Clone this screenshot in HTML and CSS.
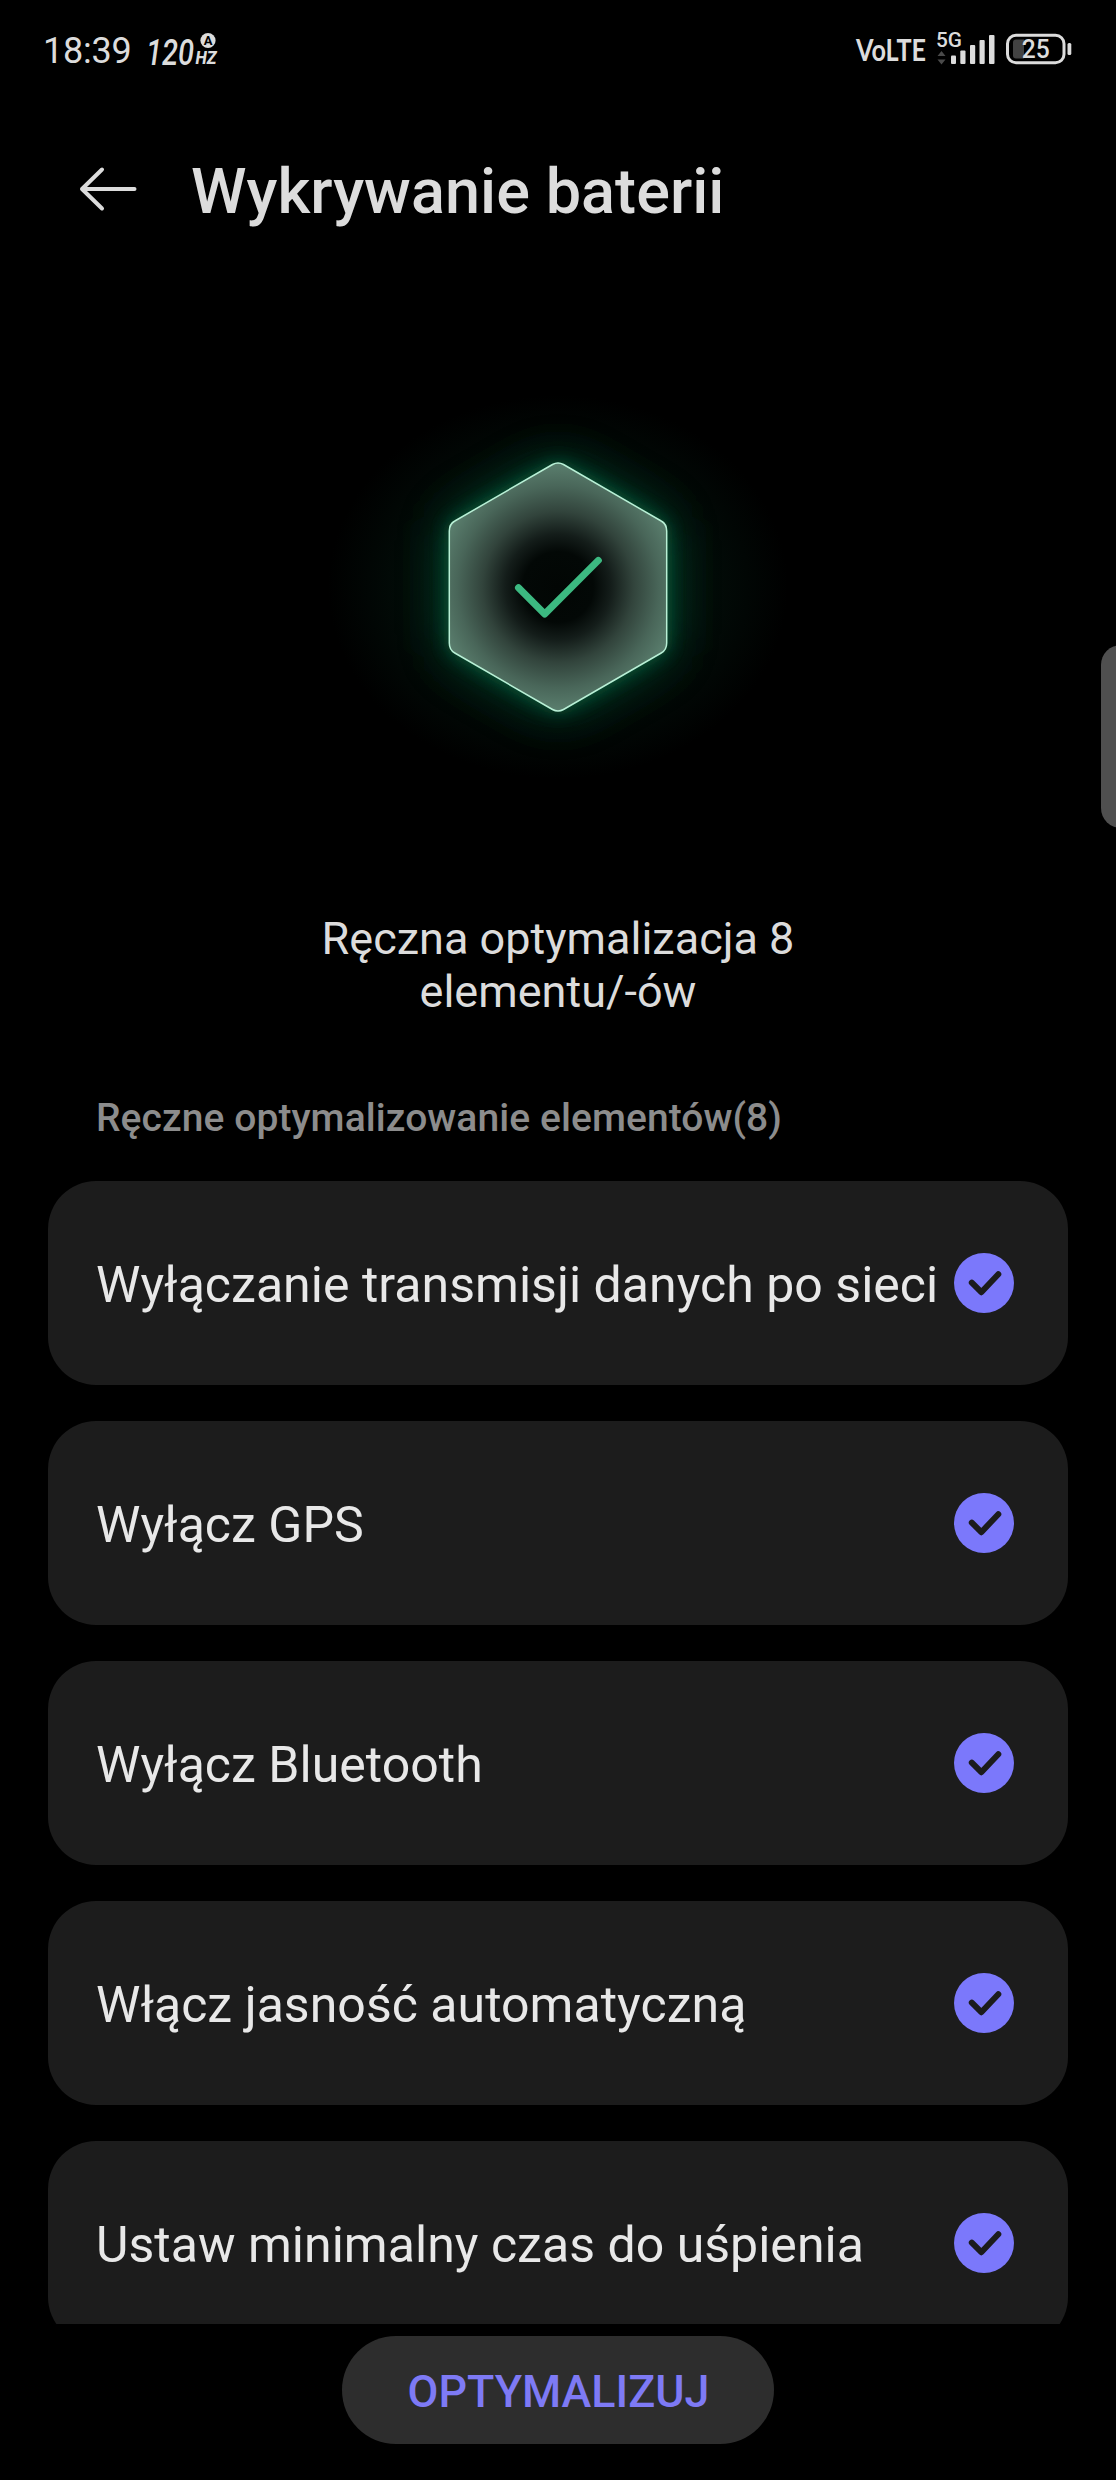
FILE: index.html
```html
<!DOCTYPE html>
<html lang="pl">
<head>
<meta charset="utf-8">
<title>Wykrywanie baterii</title>
<link rel="stylesheet" href="styles.css">
</head>
<body>
<div class="screen">
  <div class="status-bar">
    <div class="status-left">
      <span class="clock">18:39</span>
      <svg class="refresh-rate" width="80" height="40" viewBox="0 0 80 40">
        <text class="rate-value" x="0" y="34.800" textLength="48" lengthAdjust="spacingAndGlyphs">120</text>
        <text class="rate-unit" x="49.500" y="34" textLength="21" lengthAdjust="spacingAndGlyphs">HZ</text>
        <circle cx="62" cy="10.500" r="7.600" fill="#dcdcdc"/>
        <text class="rate-auto" x="62" y="15" text-anchor="middle">A</text>
      </svg>
    </div>
    <div class="status-right">
      <svg class="volte" width="80" height="40" viewBox="0 0 80 40">
        <text class="volte-label" x="0" y="31" textLength="70" lengthAdjust="spacingAndGlyphs">VoLTE</text>
      </svg>
      <svg class="signal" width="62" height="40" viewBox="0 0 62 40">
        <text class="network" x="0" y="17" textLength="26" lengthAdjust="spacingAndGlyphs">5G</text>
        <path d="M1.500 26 5.500 21l4 5zM1.500 29.500h8l-4 5z" fill="#4a4a4a"/>
        <g fill="#dcdcdc">
          <rect x="15" y="25.500" width="5" height="8.500" rx="1"/>
          <rect x="24.300" y="20.500" width="5.200" height="13.500" rx="1"/>
          <rect x="34" y="15" width="5.200" height="19" rx="1"/>
          <rect x="43.500" y="10" width="5.200" height="24" rx="1"/>
          <rect x="53" y="5" width="5.500" height="29" rx="1"/>
        </g>
      </svg>
      <svg class="battery" width="66" height="40" viewBox="0 0 66 40">
        <rect x="1.500" y="5.300" width="56.500" height="27.500" rx="8.500" fill="none" stroke="#dcdcdc" stroke-width="3"/>
        <path d="M10 9.500h8v19h-8q-3 0-3-3v-13q0-3 3-3z" fill="#424242"/>
        <rect x="61.500" y="13" width="3.800" height="12" rx="1.500" fill="#dcdcdc"/>
        <text class="battery-level" x="29.800" y="28.400" text-anchor="middle" textLength="28" lengthAdjust="spacingAndGlyphs">25</text>
      </svg>
    </div>
  </div>

  <header class="app-bar">
    <svg class="back" width="60" height="48" viewBox="0 0 60 48" fill="none" stroke="#dcdcdc" stroke-width="4" stroke-linecap="round" stroke-linejoin="round">
      <path d="M57.500 24H5M25 4.500 5 24l20 19.500"/>
    </svg>
    <h1 class="title">Wykrywanie baterii</h1>
  </header>

  <section class="hero">
    <svg class="badge" width="480" height="400" viewBox="-240 -200 480 400">
      <defs>
        <radialGradient id="core" gradientUnits="userSpaceOnUse" cx="0" cy="0" r="126">
          <stop offset="0" stop-color="#020604"/>
          <stop offset=".28" stop-color="#030806"/>
          <stop offset=".42" stop-color="#141d1a"/>
          <stop offset=".6" stop-color="#32443c"/>
          <stop offset=".8" stop-color="#496659"/>
          <stop offset="1" stop-color="#5c8170"/>
        </radialGradient>
        <radialGradient id="halo">
          <stop offset=".35" stop-color="#04180f"/>
          <stop offset=".65" stop-color="#020c08"/>
          <stop offset="1" stop-color="#000"/>
        </radialGradient>
        <filter id="soft" x="-60%" y="-60%" width="220%" height="220%"><feGaussianBlur stdDeviation="25"/></filter>
        <filter id="tight" x="-40%" y="-40%" width="180%" height="180%"><feGaussianBlur stdDeviation="9"/></filter>
        <path id="hex" d="M-5.500-122.500Q0-125.700 5.500-122.500L103.200-66Q108.700-63 108.700-56V56Q108.700 63 103.200 66L5.500 122.500Q0 125.700-5.500 122.500L-103.200 66Q-108.700 63-108.700 56V-56Q-108.700-63-103.200-66Z"/>
      </defs>
      <ellipse rx="230" ry="192" fill="url(#halo)"/>
      <use href="#hex" fill="#0c5537" opacity=".9" filter="url(#soft)"/>
      <use href="#hex" fill="#127a50" opacity=".6" filter="url(#tight)"/>
      <use href="#hex" fill="url(#core)" stroke="#b9f0d6" stroke-width="1.500"/>
      <path d="M-39.500.800-13.300 27 40.300-26.600" fill="none" stroke="#3cb981" stroke-width="7" stroke-linecap="round" stroke-linejoin="round"/>
    </svg>
    <p class="summary">Ręczna optymalizacja 8<br>elementu/-ów</p>
  </section>

  <main class="options">
    <h2 class="group-title">Ręczne optymalizowanie elementów(8)</h2>
    <ul class="cards">
      <li class="card"><span class="label">Wyłączanie transmisji danych po sieci</span><svg class="check" viewBox="0 0 60 60"><circle cx="30" cy="30" r="30"/><path d="M17.800 29.700l9.500 9.500 17-18"/></svg></li>
      <li class="card"><span class="label">Wyłącz GPS</span><svg class="check" viewBox="0 0 60 60"><circle cx="30" cy="30" r="30"/><path d="M17.800 29.700l9.500 9.500 17-18"/></svg></li>
      <li class="card"><span class="label">Wyłącz Bluetooth</span><svg class="check" viewBox="0 0 60 60"><circle cx="30" cy="30" r="30"/><path d="M17.800 29.700l9.500 9.500 17-18"/></svg></li>
      <li class="card"><span class="label">Włącz jasność automatyczną</span><svg class="check" viewBox="0 0 60 60"><circle cx="30" cy="30" r="30"/><path d="M17.800 29.700l9.500 9.500 17-18"/></svg></li>
      <li class="card"><span class="label">Ustaw minimalny czas do uśpienia</span><svg class="check" viewBox="0 0 60 60"><circle cx="30" cy="30" r="30"/><path d="M17.800 29.700l9.500 9.500 17-18"/></svg></li>
    </ul>
  </main>

  <footer class="actions">
    <button class="optimize" type="button">OPTYMALIZUJ</button>
  </footer>
  <div class="edge-handle"></div>
</div>
</body>
</html>
```
FILE: styles.css
```css
* { box-sizing: border-box; }

body {
  margin: 0;
  background: #000;
  color: #dcdcdc;
  font-family: Roboto, "Liberation Sans", sans-serif;
}

.screen {
  position: relative;
  display: flex;
  flex-direction: column;
  width: 1116px;
  height: 2480px;
  overflow: hidden;
}

.status-bar {
  display: flex;
  justify-content: space-between;
  height: 100px;
  padding: 30px 44px 0 42px;
}

.status-left,
.status-right {
  display: flex;
  height: 40px;
}

.status-bar svg { overflow: visible; }

.clock {
  width: 104px;
  padding-left: 1px;
  font-size: 36px;
  line-height: 43px;
  letter-spacing: -.2px;
}

.rate-value { font: italic 500 36px Roboto, sans-serif; fill: #dcdcdc; }
.rate-unit { font: italic 800 18px Roboto, sans-serif; fill: #dcdcdc; }
.rate-auto { font: 700 13px Roboto, sans-serif; fill: #000; }

.volte-label { font: 700 30px Lato, sans-serif; fill: #dcdcdc; }

.signal { margin-right: 8px; }
.network { font: 500 20px Roboto, sans-serif; fill: #dcdcdc; }
.battery-level { font: 500 26px Roboto, sans-serif; fill: #dcdcdc; }

.app-bar {
  display: flex;
  align-items: center;
  gap: 54px;
  height: 178px;
  padding-left: 77px;
}

.title {
  margin: 6px 0 0;
  font-size: 63px;
  font-weight: 500;
  line-height: 74px;
  letter-spacing: .05px;
}

.hero {
  display: flex;
  flex-direction: column;
  align-items: center;
  height: 809px;
  padding-top: 109px;
}

.summary {
  margin: 125px 0 0;
  font-size: 45px;
  line-height: 53px;
  text-align: center;
}

.options {
  height: 1237px;
  padding: 0 48px;
  overflow: hidden;
}

.group-title {
  height: 94px;
  margin: 0;
  padding: 8px 48px 0;
  color: #8c8c8c;
  font-size: 39px;
  font-weight: 500;
  line-height: 46px;
  letter-spacing: .07px;
}

.cards {
  display: flex;
  flex-direction: column;
  gap: 36px;
  margin: 0;
  padding: 0;
  list-style: none;
}

.card {
  display: flex;
  align-items: center;
  justify-content: space-between;
  height: 204px;
  padding: 0 54px 0 48px;
  border-radius: 48px;
  background: #1c1c1c;
}

.label {
  color: #e8e8e8;
  font-size: 50px;
  line-height: 60px;
  white-space: nowrap;
  padding-top: 3px;
  letter-spacing: .03px;
}

.check { flex: none; width: 60px; height: 60px; }
.check circle { fill: #7b78fb; }
.check path {
  fill: none;
  stroke: #1c1c1c;
  stroke-width: 6;
  stroke-linecap: round;
  stroke-linejoin: round;
}

.actions {
  display: flex;
  justify-content: center;
  align-items: flex-start;
  padding-top: 12px;
}

.optimize {
  width: 432px;
  height: 108px;
  padding: 3px 0 0 1px;
  border: 0;
  border-radius: 54px;
  background: #2d2d2d;
  color: #7e7af5;
  font: 500 44.800px Roboto, sans-serif;
}

.edge-handle {
  position: absolute;
  top: 645px;
  left: 1101px;
  width: 40px;
  height: 183px;
  border-radius: 24px;
  background: #4f4f4f;
}
```
